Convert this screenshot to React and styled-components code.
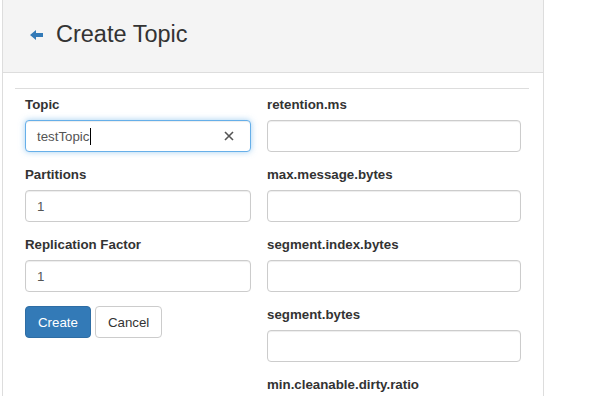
import React from "react";
import styled, { createGlobalStyle } from "styled-components";

const Global = createGlobalStyle`
  html, body { margin: 0; padding: 0; background: #fff; }
  body { font-family: "Liberation Sans", Arial, Helvetica, sans-serif; color: #333; }
  * { box-sizing: border-box; }
`;

const Panel = styled.div`
  margin-left: 2px;
  width: 542px;
  min-height: 396px;
  border-left: 1px solid #ddd;
  border-right: 1px solid #ddd;
  background: #fff;
`;

const Header = styled.div`
  height: 73px;
  background: #f4f4f4;
  border-bottom: 1px solid #ddd;
  display: flex;
  align-items: center;
  padding: 0 0 2px 27px;
  gap: 13px;
`;

const Title = styled.h1`
  margin: 0;
  font-size: 23.5px;
  font-weight: 400;
  color: #333;
  line-height: 1;
`;

const Body = styled.div`
  padding: 15px 14px 0 12px;
`;

const Rule = styled.hr`
  margin: 0 0 7px 0;
  border: 0;
  border-top: 1px solid #ddd;
  height: 0;
`;

const Form = styled.div`
  display: grid;
  grid-template-columns: 226px 254px;
  column-gap: 16px;
  padding-left: 10px;
  align-items: start;
`;

const Column = styled.div`
  display: flex;
  flex-direction: column;
`;

const Group = styled.div`
  display: flex;
  flex-direction: column;
  margin-bottom: 14px;
`;

const Label = styled.label`
  font-size: 13.3px;
  font-weight: 700;
  line-height: 18px;
  margin-bottom: 6px;
  color: #333;
`;

const Field = styled.div`
  position: relative;
  height: 32px;
  border: 1px solid ${(p) => (p.$focused ? "#66afe9" : "#ccc")};
  border-radius: 4px;
  box-shadow: ${(p) =>
    p.$focused
      ? "inset 0 1px 1px rgba(0,0,0,.075), 0 0 6px rgba(102,175,233,.6)"
      : "inset 0 1px 1px rgba(0,0,0,.075)"};
  display: flex;
  align-items: center;
  padding: 0 11px;
  font-size: 13.3px;
  color: #555;
  background: #fff;
`;

const Caret = styled.span`
  display: inline-block;
  width: 1px;
  height: 17px;
  background: #000;
  margin-left: 1px;
`;

const Clear = styled.span`
  position: absolute;
  right: 16px;
  top: 50%;
  transform: translateY(-50%);
  display: flex;
`;

const Actions = styled.div`
  display: flex;
  gap: 4px;
`;

const Button = styled.button`
  height: 32px;
  padding: 0 12px;
  font-family: inherit;
  font-size: 13.3px;
  border-radius: 4px;
  border: 1px solid ${(p) => (p.$primary ? "#2e6da4" : "#ccc")};
  background: ${(p) => (p.$primary ? "#337ab7" : "#fff")};
  color: ${(p) => (p.$primary ? "#fff" : "#333")};
`;

const BackArrow = () => (
  <svg width="13" height="10" viewBox="0 0 13 10">
    <polygon points="0,5 6,0 6,3 13,3 13,7 6,7 6,10" fill="#337ab7" />
  </svg>
);

const ClearIcon = () => (
  <svg width="10" height="10" viewBox="0 0 10 10">
    <path d="M1 1 L9 9 M9 1 L1 9" stroke="#555" strokeWidth="1.6" />
  </svg>
);

const FormField = ({ label, value, focused, clearable, caret }) => (
  <Group>
    <Label>{label}</Label>
    <Field $focused={focused}>
      {value}
      {caret && <Caret />}
      {clearable && (
        <Clear>
          <ClearIcon />
        </Clear>
      )}
    </Field>
  </Group>
);

export default function App() {
  return (
    <>
      <Global />
      <Panel>
        <Header>
          <BackArrow />
          <Title>Create Topic</Title>
        </Header>
        <Body>
          <Rule />
          <Form>
            <Column>
              <FormField label="Topic" value="testTopic" focused clearable caret />
              <FormField label="Partitions" value="1" />
              <FormField label="Replication Factor" value="1" />
              <Actions>
                <Button $primary>Create</Button>
                <Button>Cancel</Button>
              </Actions>
            </Column>
            <Column>
              <FormField label="retention.ms" />
              <FormField label="max.message.bytes" />
              <FormField label="segment.index.bytes" />
              <FormField label="segment.bytes" />
              <FormField label="min.cleanable.dirty.ratio" />
            </Column>
          </Form>
        </Body>
      </Panel>
    </>
  );
}
